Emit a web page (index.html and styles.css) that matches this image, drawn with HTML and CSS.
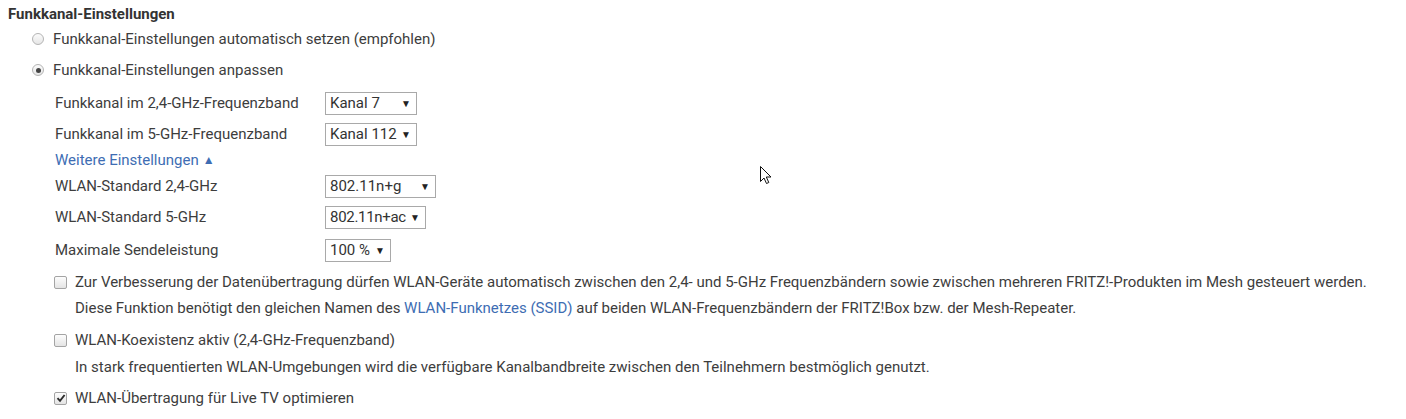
FILE: index.html
```html
<!DOCTYPE html>
<html lang="de">
<head>
<meta charset="utf-8">
<title>Funkkanal-Einstellungen</title>
<link rel="stylesheet" href="styles.css">
</head>
<body>
<div class="page">
  <h2 class="title">Funkkanal-Einstellungen</h2>
  <div class="options">
    <label class="radio-row r1"><span class="radio"></span><span>Funkkanal-Einstellungen automatisch setzen (empfohlen)</span></label>
    <label class="radio-row r2"><span class="radio checked"></span><span>Funkkanal-Einstellungen anpassen</span></label>

    <div class="settings">
      <div class="field f1"><span class="lbl">Funkkanal im 2,4-GHz-Frequenzband</span><span class="sel w91"><span>Kanal 7</span><span class="arr">▼</span></span></div>
      <div class="field f2"><span class="lbl">Funkkanal im 5-GHz-Frequenzband</span><span class="sel w91"><span>Kanal 112</span><span class="arr">▼</span></span></div>
      <a class="more">Weitere Einstellungen <span class="tri">▲</span></a>
      <div class="field f3"><span class="lbl">WLAN-Standard 2,4-GHz</span><span class="sel w110"><span>802.11n+g</span><span class="arr">▼</span></span></div>
      <div class="field f4"><span class="lbl">WLAN-Standard 5-GHz</span><span class="sel w100"><span class="tight">802.11n+ac</span><span class="arr">▼</span></span></div>
      <div class="field f5"><span class="lbl">Maximale Sendeleistung</span><span class="sel w65"><span>100 %</span><span class="arr">▼</span></span></div>

      <label class="check-row c1"><span class="box"></span><span>Zur Verbesserung der Datenübertragung dürfen WLAN-Geräte automatisch zwischen den 2,4- und 5-GHz Frequenzbändern sowie zwischen mehreren FRITZ!-Produkten im Mesh gesteuert werden.</span></label>
      <p class="hint h1">Diese Funktion benötigt den gleichen Namen des <a class="link">WLAN-Funknetzes (SSID)</a> auf beiden WLAN-Frequenzbändern der FRITZ!Box bzw. der Mesh-Repeater.</p>
      <label class="check-row c2"><span class="box"></span><span>WLAN-Koexistenz aktiv (2,4-GHz-Frequenzband)</span></label>
      <p class="hint h2">In stark frequentierten WLAN-Umgebungen wird die verfügbare Kanalbandbreite zwischen den Teilnehmern bestmöglich genutzt.</p>
      <label class="check-row c3"><span class="box checked"><svg viewBox="0 0 10 10" width="10" height="10"><path d="M1.5 5.2 L4 7.8 L8.6 2" fill="none" stroke="#2b2b2b" stroke-width="1.9"/></svg></span><span>WLAN-Übertragung für Live TV optimieren</span></label>
    </div>
  </div>
  <svg class="cursor" width="13" height="19" viewBox="0 0 13 19"><path d="M0.5 0.5 L0.5 15.5 L4 12 L6.5 17.5 L8.8 16.5 L6.3 11 L11 11 Z" fill="#fff" stroke="#111" stroke-width="1" stroke-linejoin="miter"/></svg>
</div>
</body>
</html>
```
FILE: styles.css
```css
html, body {
  margin: 0;
  padding: 0;
  background: #fff;
}
.page {
  position: relative;
  width: 1406px;
  height: 419px;
  font-family: Roboto, "Liberation Sans", sans-serif;
  font-size: 15px;
  color: #3d3d3d;
}
.title {
  margin: 0;
  height: 28px;
  display: flex;
  align-items: center;
  padding-left: 8px;
  font-size: 15px;
  font-weight: 700;
  color: #333;
}
.options {
  padding-left: 32px;
}
.radio-row {
  display: flex;
  align-items: center;
  height: 22px;
  gap: 9px;
}
.r2 { margin-top: 9px; }
.radio {
  width: 12px;
  height: 12px;
  box-sizing: border-box;
  border-radius: 50%;
  border: 1px solid #b4b4b4;
  background: linear-gradient(#fbfbfb, #e6e6e6);
  display: flex;
  align-items: center;
  justify-content: center;
}
.radio.checked::after {
  content: "";
  width: 5px;
  height: 5px;
  border-radius: 50%;
  background: #444;
}
.settings {
  padding-left: 23px;
  margin-top: 9px;
}
.field {
  display: flex;
  align-items: center;
  height: 26px;
}
.lbl {
  width: 270px;
  flex: none;
}
.f2 { margin-top: 5px; }
.f3, .f4, .f5 { height: 24px; }
.f3 { margin-top: 4px; }
.f4 { margin-top: 7px; }
.f5 { margin-top: 9px; }
.sel {
  box-sizing: border-box;
  height: 23px;
  border: 1px solid #a9a9a9;
  background: #fff;
  display: flex;
  align-items: center;
  justify-content: space-between;
  gap: 3px;
  padding: 0 5px 0 4px;
  color: #333;
}
.tight {
  letter-spacing: -0.3px;
}
.w91 { width: 92px; }
.w110 { width: 111px; }
.w100 { width: 101px; }
.w65 { width: 66px; }
.arr {
  font-size: 10px;
  color: #222;
}
.more {
  display: flex;
  align-items: center;
  height: 20px;
  margin-top: 3px;
  color: #3e6db3;
  gap: 4px;
  cursor: pointer;
}
.tri {
  font-size: 12px;
}
.check-row {
  display: flex;
  align-items: center;
  height: 22px;
  gap: 8px;
  margin-left: -1px;
}
.c1 { margin-top: 9px; }
.c2 { margin-top: 10px; }
.c3 { margin-top: 9px; }
.box {
  width: 13px;
  height: 13px;
  box-sizing: border-box;
  border: 1px solid #a4a4a4;
  border-radius: 2px;
  background: linear-gradient(#fdfdfd, #e4e4e4);
  display: flex;
  align-items: center;
  justify-content: center;
}
.hint {
  margin: 4px 0 0 20px;
  height: 22px;
  line-height: 22px;
}
.h2 { margin-top: 5px; }
.link {
  color: #3e6db3;
}
.cursor {
  position: absolute;
  left: 760px;
  top: 166px;
}
```
